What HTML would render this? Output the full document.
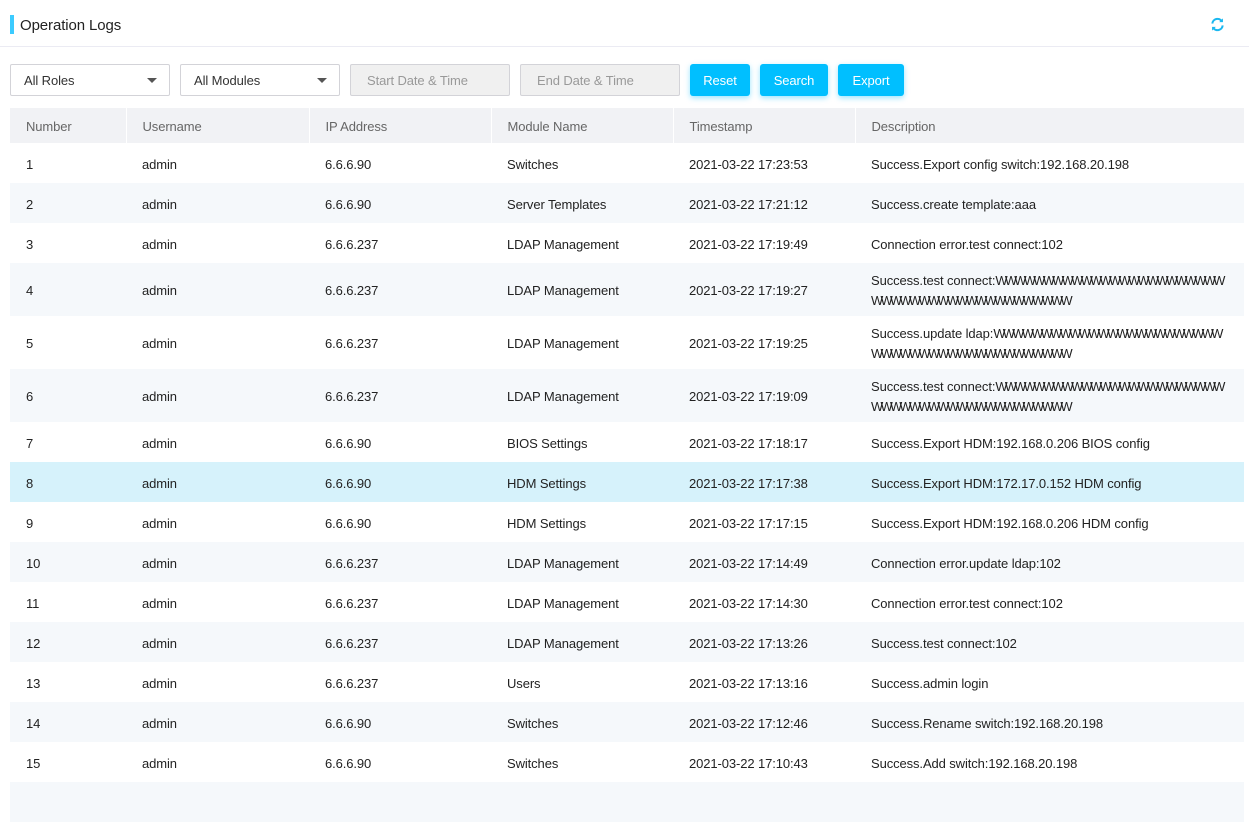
<!DOCTYPE html>
<html><head><meta charset="utf-8"><style>
*{box-sizing:border-box;margin:0;padding:0}
body{width:1249px;height:787px;overflow:hidden;background:#fff;font-family:"Liberation Sans",sans-serif;font-size:13px;color:#333;letter-spacing:-0.1px}
.hdr{height:47px;border-bottom:1px solid #ebebf3;position:relative}
.hdr .bar{position:absolute;left:10px;top:15px;width:4px;height:19px;background:#3ccbff}
.hdr .t{position:absolute;left:20px;top:17px;font-size:15px;color:#222}
.hdr svg{position:absolute;left:1210px;top:17px}
.f{position:absolute;top:64px;height:32px;border:1px solid #d3d3d8;border-radius:2px;font-size:13px;line-height:31px;padding-left:13px}
.sel{color:#333;background:#fff}
.sel:after{content:"";position:absolute;right:12px;top:13px;border-left:5px solid transparent;border-right:5px solid transparent;border-top:5px solid #555}
.dt{background:#f0f0f0;color:#999;padding-left:16px}
.btn{position:absolute;top:64px;height:32px;background:#00bfff;color:#fff;border-radius:3px;line-height:33px;text-align:center;box-shadow:0 2px 6px rgba(0,191,255,.4)}
table{position:absolute;left:10px;top:108px;width:1234px;border-collapse:collapse}
th{background:#f1f2f5;color:#666;font-weight:normal;text-align:left;height:35px;padding-left:16px;border-left:1px solid #fff;padding-top:1px}
th:first-child{border-left:none}
td{height:40px;padding-left:16px;color:#222;vertical-align:middle;padding-top:2px}
tr.s td{background:#f5f8fb}
tr.h td{background:#d6f2fb}
tr.tall td{height:53px;line-height:20px}
.w{letter-spacing:-2.8px;white-space:nowrap}
</style></head><body>
<div class="hdr"><div class="bar"></div><div class="t">Operation Logs</div>
<svg width="15" height="15" viewBox="0 0 16 16" fill="none" stroke="#1ab8f0" stroke-width="2.2"><path d="M2.5 7A5.5 5.5 0 0 1 12.6 4.5"/><path d="M13.5 9A5.5 5.5 0 0 1 3.4 11.5"/><path d="M13.8 1.5v4h-4z" fill="#1ab8f0" stroke-width="0"/><path d="M2.2 14.5v-4h4z" fill="#1ab8f0" stroke-width="0"/></svg></div>
<div class="f sel" style="left:10px;width:160px">All Roles</div>
<div class="f sel" style="left:180px;width:160px">All Modules</div>
<div class="f dt" style="left:350px;width:160px">Start Date &amp; Time</div>
<div class="f dt" style="left:520px;width:160px">End Date &amp; Time</div>
<div class="btn" style="left:690px;width:60px">Reset</div>
<div class="btn" style="left:760px;width:68px">Search</div>
<div class="btn" style="left:838px;width:66px">Export</div>
<table>
<colgroup><col style="width:116px"><col style="width:183px"><col style="width:182px"><col style="width:182px"><col style="width:182px"><col></colgroup>
<tr><th>Number</th><th>Username</th><th>IP Address</th><th>Module Name</th><th>Timestamp</th><th>Description</th></tr>
<tr><td>1</td><td>admin</td><td>6.6.6.90</td><td>Switches</td><td>2021-03-22 17:23:53</td><td>Success.Export config switch:192.168.20.198</td></tr>
<tr class="s"><td>2</td><td>admin</td><td>6.6.6.90</td><td>Server Templates</td><td>2021-03-22 17:21:12</td><td>Success.create template:aaa</td></tr>
<tr><td>3</td><td>admin</td><td>6.6.6.237</td><td>LDAP Management</td><td>2021-03-22 17:19:49</td><td>Connection error.test connect:102</td></tr>
<tr class="s tall"><td>4</td><td>admin</td><td>6.6.6.237</td><td>LDAP Management</td><td>2021-03-22 17:19:27</td><td>Success.test connect:<span class="w">WWWWWWWWWWWWWWWWWWWWWWWW</span><br><span class="w">WWWWWWWWWWWWWWWWWWWWW</span></td></tr>
<tr class="tall"><td>5</td><td>admin</td><td>6.6.6.237</td><td>LDAP Management</td><td>2021-03-22 17:19:25</td><td>Success.update ldap:<span class="w">WWWWWWWWWWWWWWWWWWWWWWWW</span><br><span class="w">WWWWWWWWWWWWWWWWWWWWW</span></td></tr>
<tr class="s tall"><td>6</td><td>admin</td><td>6.6.6.237</td><td>LDAP Management</td><td>2021-03-22 17:19:09</td><td>Success.test connect:<span class="w">WWWWWWWWWWWWWWWWWWWWWWWW</span><br><span class="w">WWWWWWWWWWWWWWWWWWWWW</span></td></tr>
<tr><td>7</td><td>admin</td><td>6.6.6.90</td><td>BIOS Settings</td><td>2021-03-22 17:18:17</td><td>Success.Export HDM:192.168.0.206 BIOS config</td></tr>
<tr class="h"><td>8</td><td>admin</td><td>6.6.6.90</td><td>HDM Settings</td><td>2021-03-22 17:17:38</td><td>Success.Export HDM:172.17.0.152 HDM config</td></tr>
<tr><td>9</td><td>admin</td><td>6.6.6.90</td><td>HDM Settings</td><td>2021-03-22 17:17:15</td><td>Success.Export HDM:192.168.0.206 HDM config</td></tr>
<tr class="s"><td>10</td><td>admin</td><td>6.6.6.237</td><td>LDAP Management</td><td>2021-03-22 17:14:49</td><td>Connection error.update ldap:102</td></tr>
<tr><td>11</td><td>admin</td><td>6.6.6.237</td><td>LDAP Management</td><td>2021-03-22 17:14:30</td><td>Connection error.test connect:102</td></tr>
<tr class="s"><td>12</td><td>admin</td><td>6.6.6.237</td><td>LDAP Management</td><td>2021-03-22 17:13:26</td><td>Success.test connect:102</td></tr>
<tr><td>13</td><td>admin</td><td>6.6.6.237</td><td>Users</td><td>2021-03-22 17:13:16</td><td>Success.admin login</td></tr>
<tr class="s"><td>14</td><td>admin</td><td>6.6.6.90</td><td>Switches</td><td>2021-03-22 17:12:46</td><td>Success.Rename switch:192.168.20.198</td></tr>
<tr><td>15</td><td>admin</td><td>6.6.6.90</td><td>Switches</td><td>2021-03-22 17:10:43</td><td>Success.Add switch:192.168.20.198</td></tr>
<tr class="s"><td></td><td></td><td></td><td></td><td></td><td></td></tr>
</table>
</body></html>
